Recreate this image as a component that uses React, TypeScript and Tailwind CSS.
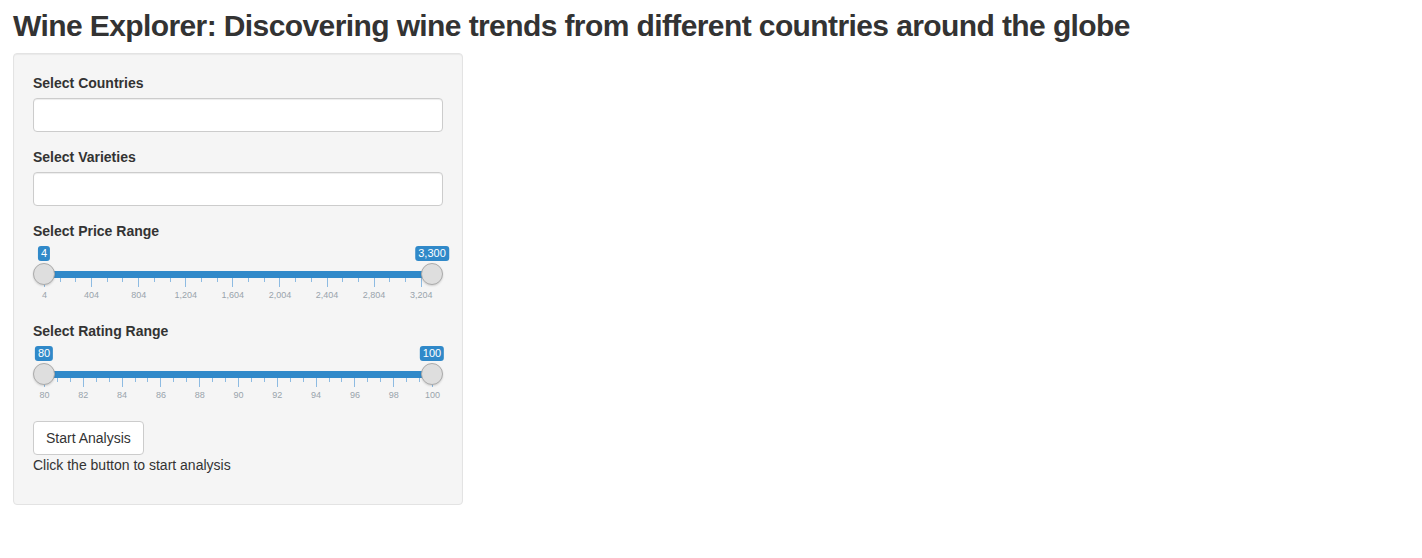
import React from 'react';

type SliderProps = {
  min: number;
  max: number;
  from: number;
  to: number;
  majorStep: number;
};

const fmt = (v: number) => v.toLocaleString('en-US');

// track runs between the two handle centres, 11px in from each side of the 410px box
const TRACK = 388;

const RangeSlider: React.FC<SliderProps> = ({ min, max, from, to, majorStep }) => {
  const pos = (v: number) => 11 + ((v - min) / (max - min)) * TRACK;
  const ticks: { v: number; major: boolean }[] = [];
  for (let i = 0; min + (i * majorStep) / 3 <= max + 1e-9; i++) {
    ticks.push({ v: min + (i * majorStep) / 3, major: i % 3 === 0 });
  }

  return (
    <div className="relative h-[60px] w-full">
      <div
        className="absolute top-[25px] h-[7px] bg-[#3089c9]"
        style={{ left: pos(from), width: pos(to) - pos(from) }}
      />
      {ticks.map((t, i) => (
        <div
          key={i}
          className={
            t.major
              ? 'absolute top-[32px] h-[9px] w-px bg-[#8dbbe2]'
              : 'absolute top-[32px] h-[4px] w-px bg-[#8dbbe2]'
          }
          style={{ left: Math.round(pos(t.v)) }}
        />
      ))}
      {ticks
        .filter((t) => t.major)
        .map((t, i) => (
          <span
            key={i}
            className="absolute top-[45px] -translate-x-1/2 whitespace-nowrap text-[9px] leading-[9px] text-[#99a4ac]"
            style={{ left: pos(t.v) + 0.5 }}
          >
            {fmt(t.v)}
          </span>
        ))}
      {[from, to].map((v, i) => (
        <React.Fragment key={i}>
          <div
            className="absolute top-[17px] h-[22px] w-[22px] rounded-full border border-[#ababab] bg-[#dedede] shadow-[0_1px_2px_rgba(0,0,0,0.15)]"
            style={{ left: pos(v) - 11 }}
          />
          <span
            className="absolute top-0 -translate-x-1/2 whitespace-nowrap rounded-[3px] bg-[#3089c9] px-[3px] py-px text-[11px] leading-[13px] text-white"
            style={{ left: pos(v) }}
          >
            {fmt(v)}
          </span>
        </React.Fragment>
      ))}
    </div>
  );
};

const FieldLabel: React.FC<{ children: React.ReactNode }> = ({ children }) => (
  <label className="mb-[5px] block text-sm leading-5 font-bold text-[#333]">{children}</label>
);

const SelectBox = () => (
  <div className="h-[34px] w-full rounded border border-[#ccc] bg-white shadow-[inset_0_1px_1px_rgba(0,0,0,0.075)]" />
);

export default function App() {
  return (
    <div className="min-h-screen bg-white px-[13px] pt-[9px] font-['Liberation_Sans',Arial,sans-serif] text-[#333]">
      <h2 className="mb-[11px] text-[30px] leading-[33px] font-bold tracking-[-0.6px] text-[#333]">
        Wine Explorer: Discovering wine trends from different countries around the globe
      </h2>

      <div className="flex w-[450px] flex-col gap-[15px] rounded border border-[#e3e3e3] bg-[#f5f5f5] p-[19px] shadow-[inset_0_1px_1px_rgba(0,0,0,0.05)]">
        <div>
          <FieldLabel>Select Countries</FieldLabel>
          <SelectBox />
        </div>
        <div>
          <FieldLabel>Select Varieties</FieldLabel>
          <SelectBox />
        </div>
        <div>
          <FieldLabel>Select Price Range</FieldLabel>
          <RangeSlider min={4} max={3300} from={4} to={3300} majorStep={400} />
        </div>
        <div>
          <FieldLabel>Select Rating Range</FieldLabel>
          <RangeSlider min={80} max={100} from={80} to={100} majorStep={2} />
        </div>
        <div className="flex flex-col items-start pb-[10px]">
          <button className="h-[34px] rounded border border-[#ccc] bg-white px-3 text-sm leading-5 text-[#333]">
            Start Analysis
          </button>
          <div className="text-sm leading-5 text-[#333]">Click the button to start analysis</div>
        </div>
      </div>
    </div>
  );
}
